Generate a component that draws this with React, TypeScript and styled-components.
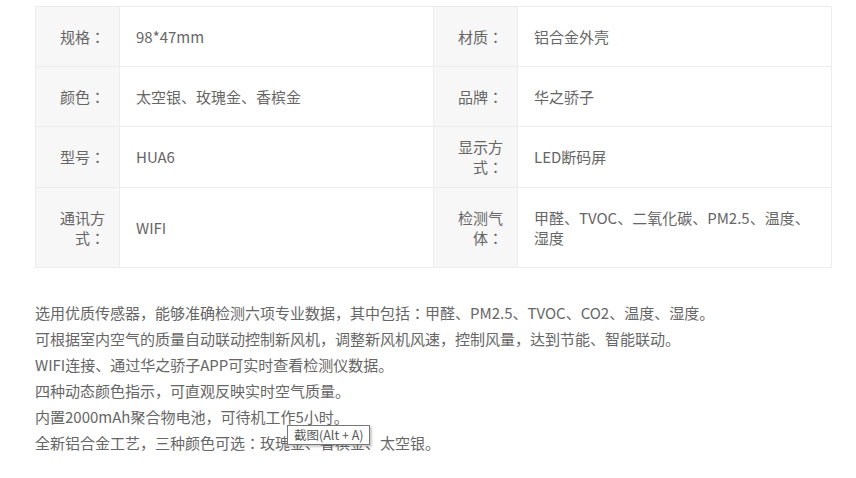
import React from "react";
import styled, { createGlobalStyle } from "styled-components";

const GlobalStyle = createGlobalStyle`
  body {
    margin: 0;
    background: #fff;
    font-family: "Microsoft YaHei", "Noto Sans CJK JP", "Noto Sans CJK SC", sans-serif;
    color: #666;
  }
`;

const specs: [string, string, string, string][] = [
  ["规格：", "98*47mm", "材质：", "铝合金外壳"],
  ["颜色：", "太空银、玫瑰金、香槟金", "品牌：", "华之骄子"],
  ["型号：", "HUA6", "显示方式：", "LED断码屏"],
  ["通讯方式：", "WIFI", "检测气体：", "甲醛、TVOC、二氧化碳、PM2.5、温度、湿度"],
];

const lines = [
  "选用优质传感器，能够准确检测六项专业数据，其中包括：甲醛、PM2.5、TVOC、CO2、温度、湿度。",
  "可根据室内空气的质量自动联动控制新风机，调整新风机风速，控制风量，达到节能、智能联动。",
  "WIFI连接、通过华之骄子APP可实时查看检测仪数据。",
  "四种动态颜色指示，可直观反映实时空气质量。",
  "内置2000mAh聚合物电池，可待机工作5小时。",
  "全新铝合金工艺，三种颜色可选：玫瑰金、香槟金、太空银。",
];

export default function App() {
  return (
    <>
      <GlobalStyle />
      <Page>
        <SpecGrid>
          {specs.map((row) => (
            <React.Fragment key={row[0]}>
              <LabelCell>{row[0]}</LabelCell>
              <ValueCell>{row[1]}</ValueCell>
              <LabelCell>{row[2]}</LabelCell>
              <ValueCell>{row[3]}</ValueCell>
            </React.Fragment>
          ))}
        </SpecGrid>
        <Description>
          {lines.map((l, i) => (
            <Line key={i}>{l}</Line>
          ))}
          <Tooltip>截图(Alt + A)</Tooltip>
        </Description>
      </Page>
    </>
  );
}

/**
 * styles
 */
const Page = styled.div`
  padding: 6px 0 0 35px;
  width: 797px;
`;

const SpecGrid = styled.div`
  display: grid;
  grid-template-columns: 83px 313px 83px 313px;
  grid-template-rows: 59px 59px 60px 79px;
  gap: 1px;
  padding: 1px;
  width: 797px;
  box-sizing: border-box;
  background: #ededed;
  font-size: 15px;
  line-height: 20px;
`;

const LabelCell = styled.div`
  display: flex;
  align-items: center;
  justify-content: flex-end;
  text-align: right;
  padding: 0 14px 0 22px;
  background: #f7f7f7;
  color: #666;
`;

const ValueCell = styled.div`
  display: flex;
  align-items: center;
  padding: 0 14px 0 16px;
  background: #fff;
  color: #666;
`;

const Description = styled.div`
  position: relative;
  margin-top: 32px;
  font-size: 15px;
`;

const Line = styled.p`
  margin: 0;
  line-height: 26px;
  color: #666;
`;

const Tooltip = styled.div`
  position: absolute;
  left: 252px;
  top: 125px;
  height: 18px;
  padding: 0 6px;
  background: #fff;
  border: 1px solid #767676;
  box-shadow: 2px 2px 2px rgba(0, 0, 0, 0.2);
  font-size: 12.5px;
  line-height: 18px;
  color: #575757;
  white-space: nowrap;
`;
